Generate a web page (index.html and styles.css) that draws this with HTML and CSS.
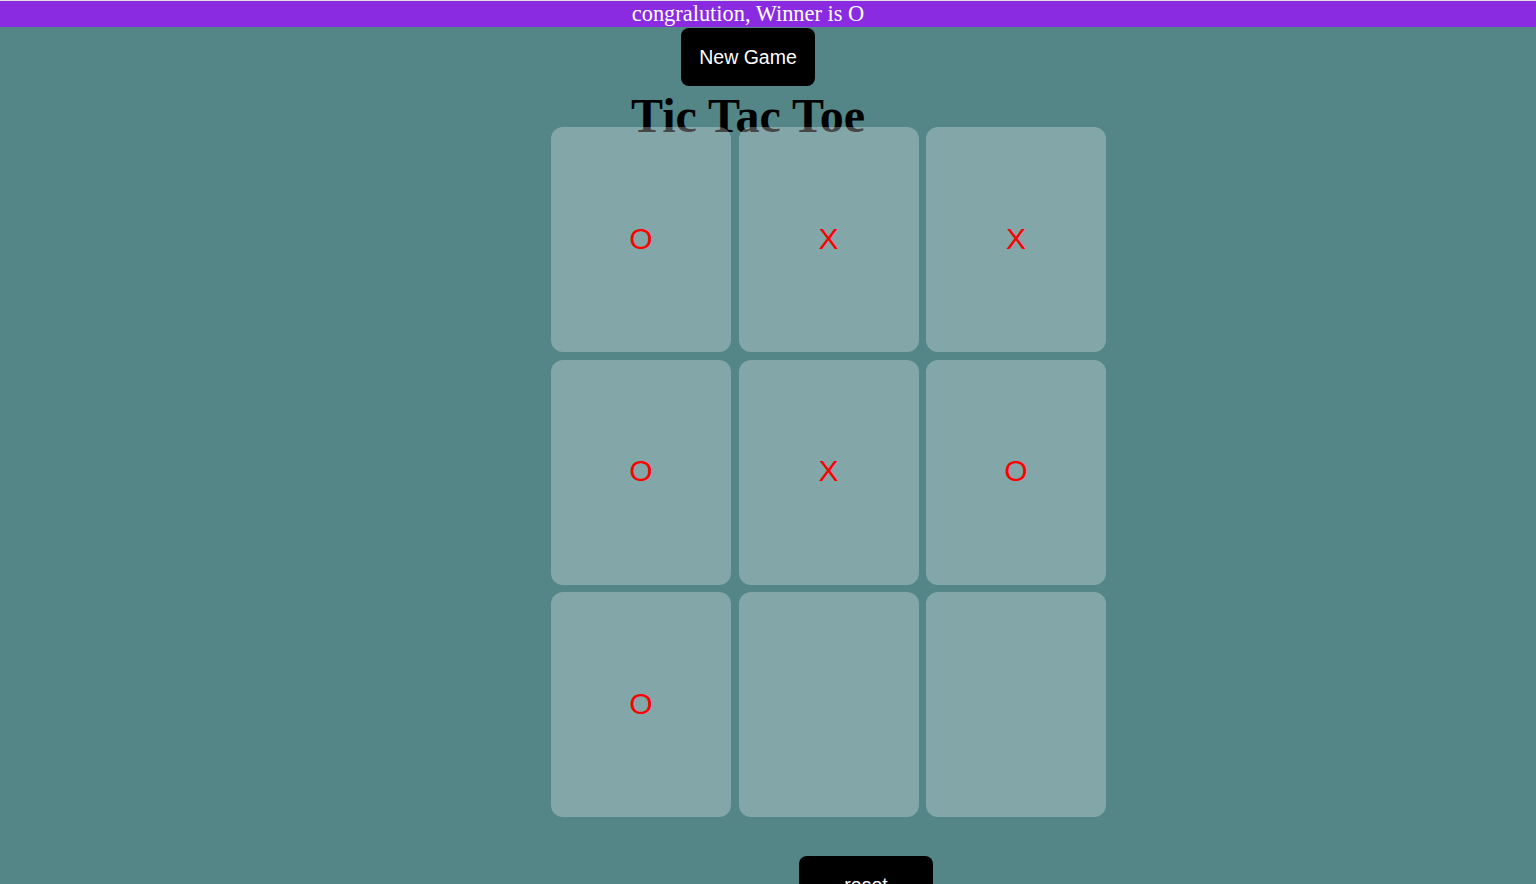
FILE: index.html
```html
<!DOCTYPE html>
<html lang="en">
<head>
<meta charset="UTF-8">
<title>Tic Tac Toe</title>
<link rel="stylesheet" href="styles.css">
</head>
<body>
  <div class="msg-bar">
    <p class="msg">congralution, Winner is O</p>
  </div>
  <div class="top">
    <button class="btn new-game">New Game</button>
    <h1 class="title">Tic Tac Toe</h1>
  </div>
  <main class="game">
    <div class="board">
      <button class="box">O</button>
      <button class="box">X</button>
      <button class="box">X</button>
      <button class="box">O</button>
      <button class="box">X</button>
      <button class="box">O</button>
      <button class="box">O</button>
      <button class="box"></button>
      <button class="box"></button>
    </div>
    <button class="btn reset">reset</button>
  </main>
</body>
</html>
```

FILE: styles.css
```css
html, body {
  margin: 0;
  padding: 0;
}
body {
  background-color: #548687;
  border-top: 1px solid #e3e3e3;
  min-height: 883px;
  overflow: hidden;
}
.msg-bar {
  background-color: #8a2be2;
  padding-right: 40px;
  text-align: center;
}
.msg {
  margin: 0;
  color: #ffffff;
  font-family: "Liberation Serif", "Times New Roman", serif;
  font-size: 22.4px;
  line-height: 26px;
}
.top {
  display: flex;
  flex-direction: column;
  align-items: center;
  padding-right: 40px;
}
.btn {
  box-sizing: border-box;
  width: 134px;
  height: 58px;
  border: none;
  border-radius: 8px;
  background-color: #000000;
  color: #ffffff;
  font-family: "Liberation Sans", Arial, sans-serif;
  font-size: 19.5px;
  padding: 0;
  cursor: pointer;
}
.new-game {
  margin-top: 1px;
}
.title {
  margin: 3px 0 -15px 0;
  font-family: "Liberation Serif", "Times New Roman", serif;
  font-size: 48px;
  font-weight: bold;
  line-height: 53px;
  color: #000000;
}
.game {
  display: flex;
  flex-direction: column;
  align-items: flex-start;
  padding-left: 551px;
}
.board {
  display: grid;
  grid-template-columns: repeat(3, 180px);
  grid-template-rows: repeat(3, 225px);
  column-gap: 7.5px;
  row-gap: 7.5px;
}
.box {
  border: none;
  border-radius: 12px;
  background-color: rgba(255, 255, 255, 0.28);
  color: #ff0000;
  font-family: "Liberation Sans", Arial, sans-serif;
  font-size: 30px;
  padding: 0 0 2px 0;
}
.reset {
  margin-top: 39px;
  margin-left: 248px;
}
```
